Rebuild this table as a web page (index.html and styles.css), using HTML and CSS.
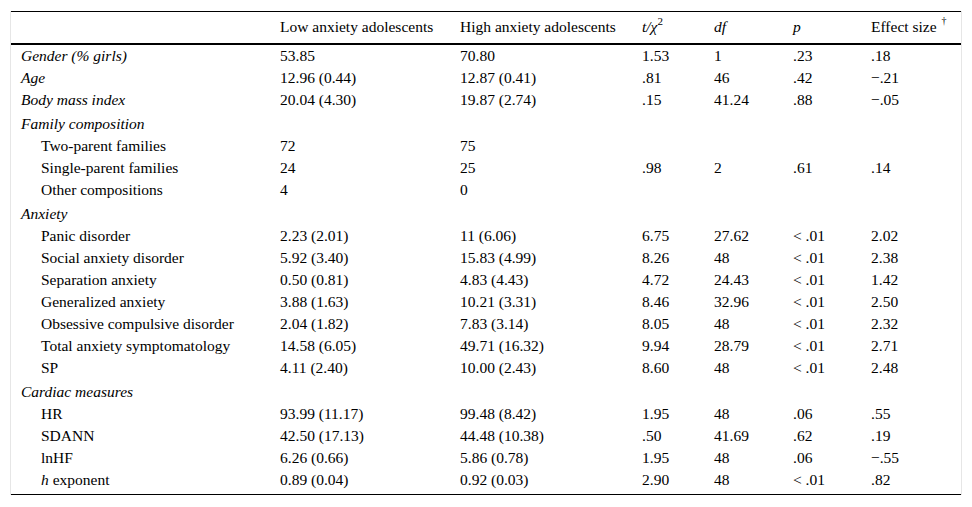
FILE: index.html
```html
<!DOCTYPE html>
<html>
<head>
<meta charset="utf-8">
<link rel="stylesheet" href="styles.css">
</head>
<body>
<div class="frame">
<table class="tbl">
<colgroup>
<col class="c1"><col class="c2"><col class="c3"><col class="c4"><col class="c5"><col class="c6"><col class="c7">
</colgroup>
<thead>
<tr><th></th><th>Low anxiety adolescents</th><th>High anxiety adolescents</th><th><i>t/χ</i><sup>2</sup></th><th><i>df</i></th><th><i>p</i></th><th>Effect size <sup class="dag">†</sup></th></tr>
</thead>
<tbody>
<tr><td><i>Gender (% girls)</i></td><td>53.85</td><td>70.80</td><td>1.53</td><td>1</td><td>.23</td><td>.18</td></tr>
<tr><td><i>Age</i></td><td>12.96 (0.44)</td><td>12.87 (0.41)</td><td>.81</td><td>46</td><td>.42</td><td>−.21</td></tr>
<tr><td><i>Body mass index</i></td><td>20.04 (4.30)</td><td>19.87 (2.74)</td><td>.15</td><td>41.24</td><td>.88</td><td>−.05</td></tr>
<tr class="cat"><td><i>Family composition</i></td><td></td><td></td><td></td><td></td><td></td><td></td></tr>
<tr><td class="ind">Two-parent families</td><td>72</td><td>75</td><td></td><td></td><td></td><td></td></tr>
<tr><td class="ind">Single-parent families</td><td>24</td><td>25</td><td>.98</td><td>2</td><td>.61</td><td>.14</td></tr>
<tr><td class="ind">Other compositions</td><td>4</td><td>0</td><td></td><td></td><td></td><td></td></tr>
<tr class="cat"><td><i>Anxiety</i></td><td></td><td></td><td></td><td></td><td></td><td></td></tr>
<tr><td class="ind">Panic disorder</td><td>2.23 (2.01)</td><td>11 (6.06)</td><td>6.75</td><td>27.62</td><td>&lt; .01</td><td>2.02</td></tr>
<tr><td class="ind">Social anxiety disorder</td><td>5.92 (3.40)</td><td>15.83 (4.99)</td><td>8.26</td><td>48</td><td>&lt; .01</td><td>2.38</td></tr>
<tr><td class="ind">Separation anxiety</td><td>0.50 (0.81)</td><td>4.83 (4.43)</td><td>4.72</td><td>24.43</td><td>&lt; .01</td><td>1.42</td></tr>
<tr><td class="ind">Generalized anxiety</td><td>3.88 (1.63)</td><td>10.21 (3.31)</td><td>8.46</td><td>32.96</td><td>&lt; .01</td><td>2.50</td></tr>
<tr><td class="ind">Obsessive compulsive disorder</td><td>2.04 (1.82)</td><td>7.83 (3.14)</td><td>8.05</td><td>48</td><td>&lt; .01</td><td>2.32</td></tr>
<tr><td class="ind">Total anxiety symptomatology</td><td>14.58 (6.05)</td><td>49.71 (16.32)</td><td>9.94</td><td>28.79</td><td>&lt; .01</td><td>2.71</td></tr>
<tr><td class="ind">SP</td><td>4.11 (2.40)</td><td>10.00 (2.43)</td><td>8.60</td><td>48</td><td>&lt; .01</td><td>2.48</td></tr>
<tr class="cat"><td><i>Cardiac measures</i></td><td></td><td></td><td></td><td></td><td></td><td></td></tr>
<tr><td class="ind">HR</td><td>93.99 (11.17)</td><td>99.48 (8.42)</td><td>1.95</td><td>48</td><td>.06</td><td>.55</td></tr>
<tr><td class="ind">SDANN</td><td>42.50 (17.13)</td><td>44.48 (10.38)</td><td>.50</td><td>41.69</td><td>.62</td><td>.19</td></tr>
<tr><td class="ind">lnHF</td><td>6.26 (0.66)</td><td>5.86 (0.78)</td><td>1.95</td><td>48</td><td>.06</td><td>−.55</td></tr>
<tr class="last"><td class="ind"><i>h</i> exponent</td><td>0.89 (0.04)</td><td>0.92 (0.03)</td><td>2.90</td><td>48</td><td>&lt; .01</td><td>.82</td></tr>
</tbody>
</table>
</div>
</body>
</html>
```

FILE: styles.css
```css
html, body {
  margin: 0;
  padding: 0;
  background: #fff;
}
body {
  font-family: "Liberation Serif", "Times New Roman", serif;
  font-size: 15.5px;
  color: #000;
}
.frame {
  margin: 11px 0 0 10px;
  width: 950px;
  border-left: 1px solid #e6e6e6;
  border-right: 1px solid #e6e6e6;
}
.tbl {
  width: 950px;
  border-collapse: collapse;
  table-layout: fixed;
  border-top: 1px solid #000;
  border-bottom: 1.5px solid #000;
}
.c1 { width: 259px; }
.c2 { width: 180px; }
.c3 { width: 182px; }
.c4 { width: 72px; }
.c5 { width: 79px; }
.c6 { width: 78px; }
.c7 { width: 100px; }
th, td {
  padding: 0 0 0 10px;
  text-align: left;
  font-weight: normal;
  white-space: nowrap;
  line-height: 22px;
  height: 22px;
  box-sizing: border-box;
  vertical-align: middle;
}
thead th {
  height: 32px;
  border-bottom: 2px solid #000;
  line-height: 20px;
}
thead sup {
  font-size: 11px;
  line-height: 0;
  vertical-align: 7px;
}
thead sup.dag {
  font-size: 10px;
  vertical-align: 8px;
  margin-left: 1px;
}
tr.cat td {
  height: 24px;
  padding-top: 2px;
}
td.ind {
  padding-left: 30px;
}
tr.last td {
  height: 25px;
  padding-bottom: 3px;
}
```
